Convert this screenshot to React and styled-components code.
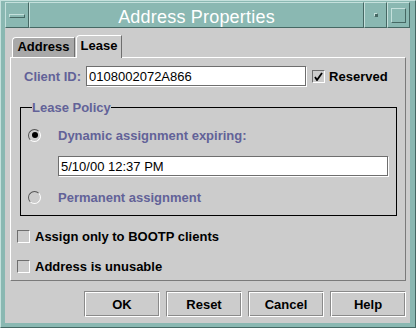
import React from 'react'
import styled, { createGlobalStyle } from 'styled-components'

const LIGHT = '#c4e0dc'
const DARK = '#466864'
const TEAL = '#8ab8b2'
const PURPLE = '#626298'

const GlobalStyle = createGlobalStyle`
  html, body { margin: 0; padding: 0; background: ${TEAL}; }
  body { font-family: "Liberation Sans", Arial, sans-serif; }
  * { box-sizing: border-box; }
`

const Window = styled.div`
  width: 416px;
  height: 328px;
  background: ${TEAL};
  border-top: 1px solid ${LIGHT};
  border-left: 1px solid ${LIGHT};
  border-right: 1px solid ${DARK};
  border-bottom: 1px solid ${DARK};
  padding: 1px 5px 4px 4px;
  display: flex;
  flex-direction: column;
`

const TitleBar = styled.div`
  display: flex;
  height: 26px;
  flex: none;
`

const Bevel = styled.div`
  border-top: 1px solid ${LIGHT};
  border-left: 1px solid ${LIGHT};
  border-right: 1px solid ${DARK};
  border-bottom: 1px solid ${DARK};
  background: ${TEAL};
`

const FrameButton = styled(Bevel)`
  width: ${p => p.$w || 23}px;
  display: flex;
  align-items: center;
  justify-content: center;
`

const Title = styled(Bevel)`
  flex: 1;
  color: #fff;
  font-size: 18px;
  line-height: 24px;
  padding-top: 2px;
  text-align: center;
  letter-spacing: 0.2px;
`

const MenuBar = styled.span`
  width: 16px;
  height: 4px;
  margin-top: 1px;
  border-top: 1px solid ${LIGHT};
  border-left: 1px solid ${LIGHT};
  border-right: 1px solid ${DARK};
  border-bottom: 1px solid ${DARK};
`

const MinDot = styled.span`
  width: 4px;
  height: 4px;
  border-top: 1px solid ${LIGHT};
  border-left: 1px solid ${LIGHT};
  border-right: 1px solid ${DARK};
  border-bottom: 1px solid ${DARK};
  background: ${DARK};
`

const MaxBox = styled.span`
  width: 15px;
  height: 15px;
  border-top: 1px solid ${LIGHT};
  border-left: 1px solid ${LIGHT};
  border-right: 1px solid ${DARK};
  border-bottom: 1px solid ${DARK};
`

const Body = styled.div`
  flex: 1;
  background: #cccccc;
  padding: 7px 4px 6px 5px;
  display: flex;
  flex-direction: column;
  font-size: 13px;
  font-weight: bold;
`

const TabRow = styled.div`
  display: flex;
  align-items: flex-end;
  height: 22px;
  margin-left: 2px;
`

const Tab = styled.div`
  position: relative;
  z-index: 1;
  width: ${p => p.$w}px;
  height: ${p => (p.$active ? 23 : 20)}px;
  margin-bottom: ${p => (p.$active ? -1 : 0)}px;
  margin-right: 1px;
  background: ${p => (p.$active ? '#cccccc' : '#a9a9a9')};
  border-top: 1px solid #fff;
  border-left: 1px solid #fff;
  border-right: 1px solid #6e6e6e;
  border-top-left-radius: 4px;
  color: #000;
  text-align: center;
  line-height: ${p => (p.$active ? 20 : 18)}px;
`

const Panel = styled.div`
  height: 224px;
  border-top: 1px solid #fff;
  border-left: 1px solid #fff;
  border-right: 1px solid #7a7a7a;
  border-bottom: 1px solid #7a7a7a;
  padding: 8px 0 0 6px;
  display: flex;
  flex-direction: column;
`

const Row = styled.div`
  display: flex;
  align-items: center;
  height: 20px;
  margin-left: ${p => p.$indent || 0}px;
  margin-top: ${p => p.$top || 0}px;
`

const Label = styled.span`
  color: ${p => (p.$purple ? PURPLE : '#000')};
  margin-left: ${p => p.$gap || 0}px;
  white-space: nowrap;
`

const Field = styled.input`
  width: ${p => p.$w}px;
  height: 20px;
  margin-left: ${p => p.$left || 0}px;
  margin-top: ${p => p.$top || 0}px;
  padding: 0 2px;
  border: 1px solid #6e6e6e;
  box-shadow: 1px 1px 0 #fff;
  background: #fff;
  font-family: "Liberation Sans", Arial, sans-serif;
  font-size: 13px;
  font-weight: normal;
  color: #000;
  outline: none;
`

const Box = styled.span`
  flex: none;
  width: 13px;
  height: 13px;
  margin-left: ${p => p.$left || 0}px;
  border-top: 1px solid #6e6e6e;
  border-left: 1px solid #6e6e6e;
  border-right: 1px solid #fff;
  border-bottom: 1px solid #fff;
  background: #cccccc;
  display: flex;
  align-items: center;
  justify-content: center;
`

const Radio = styled.span`
  flex: none;
  width: 13px;
  height: 13px;
  border-radius: 50%;
  border: 1px solid;
  border-color: #555 #fff #fff #555;
  background: #cccccc;
  display: flex;
  align-items: center;
  justify-content: center;
  &::after {
    content: '';
    width: 6px;
    height: 6px;
    border-radius: 50%;
    background: ${p => (p.$on ? '#000' : 'transparent')};
  }
`

const Group = styled.fieldset`
  width: 377px;
  margin: 14px 0 0 3px;
  padding: 10px 0 8px 7px;
  border: 1px solid #000;
  min-inline-size: 0;
`

const Legend = styled.legend`
  color: ${PURPLE};
  padding: 0;
  margin-left: 4px;
  line-height: 15px;
`

const ButtonRow = styled.div`
  display: flex;
  justify-content: flex-end;
  gap: 6px;
  margin-top: 10px;
`

const Button = styled.div`
  width: 76px;
  height: 26px;
  border-top: 1px solid #8a8a8a;
  border-left: 1px solid #8a8a8a;
  border-right: 1px solid #fff;
  border-bottom: 1px solid #fff;
  box-shadow: inset 1px 1px 0 #fff, inset -1px -1px 0 #8a8a8a;
  display: flex;
  align-items: center;
  justify-content: center;
  color: #000;
`

const Check = () => (
  <svg width="9" height="9" viewBox="0 0 9 9">
    <path d="M1 5 L3 8 L8 1" stroke="#000" strokeWidth="1.8" fill="none" />
  </svg>
)

export default function App() {
  return (
    <>
      <GlobalStyle />
      <Window>
        <TitleBar>
          <FrameButton $w={24}><MenuBar /></FrameButton>
          <Title>Address Properties</Title>
          <FrameButton><MinDot /></FrameButton>
          <FrameButton><MaxBox /></FrameButton>
        </TitleBar>
        <Body>
          <TabRow>
            <Tab $w={63}>Address</Tab>
            <Tab $w={46} $active>Lease</Tab>
          </TabRow>
          <Panel>
            <Row $indent={7}>
              <Label $purple>Client ID:</Label>
              <Field $w={220} $left={5} readOnly defaultValue="0108002072A866" />
              <Box $left={6}><Check /></Box>
              <Label $gap={4}>Reserved</Label>
            </Row>
            <Group>
              <Legend>Lease Policy</Legend>
              <Row>
                <Radio $on />
                <Label $purple $gap={17}>Dynamic assignment expiring:</Label>
              </Row>
              <Field $w={330} $left={30} $top={11} readOnly defaultValue="5/10/00 12:37 PM" />
              <Row $top={11}>
                <Radio />
                <Label $purple $gap={17}>Permanent assignment</Label>
              </Row>
            </Group>
            <Row $top={10}>
              <Box />
              <Label $gap={5}>Assign only to BOOTP clients</Label>
            </Row>
            <Row $top={10}>
              <Box />
              <Label $gap={5}>Address is unusable</Label>
            </Row>
          </Panel>
          <ButtonRow>
            <Button>OK</Button>
            <Button>Reset</Button>
            <Button>Cancel</Button>
            <Button>Help</Button>
          </ButtonRow>
        </Body>
      </Window>
    </>
  )
}
